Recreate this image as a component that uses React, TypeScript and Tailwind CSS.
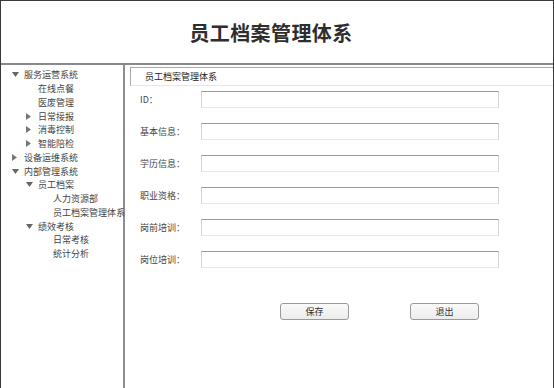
import React from "react";

type Node = { label: string; level: number; arrow?: "down" | "right" };

const tree: Node[] = [
  { label: "服务运营系统", level: 0, arrow: "down" },
  { label: "在线点餐", level: 1 },
  { label: "医废管理", level: 1 },
  { label: "日常接报", level: 1, arrow: "right" },
  { label: "消毒控制", level: 1, arrow: "right" },
  { label: "智能陪检", level: 1, arrow: "right" },
  { label: "设备运维系统", level: 0, arrow: "right" },
  { label: "内部管理系统", level: 0, arrow: "down" },
  { label: "员工档案", level: 1, arrow: "down" },
  { label: "人力资源部", level: 2 },
  { label: "员工档案管理体系", level: 2 },
  { label: "绩效考核", level: 1, arrow: "down" },
  { label: "日常考核", level: 2 },
  { label: "统计分析", level: 2 },
];

const fields = ["ID：", "基本信息：", "学历信息：", "职业资格：", "岗前培训：", "岗位培训："];

function Arrow({ dir }: { dir: "down" | "right" }) {
  if (dir === "down")
    return (
      <svg width="7" height="5" viewBox="0 0 7 5">
        <path d="M0 0 L7 0 L3.5 5 Z" fill="#666" />
      </svg>
    );
  return (
    <svg width="5" height="7" viewBox="0 0 5 7">
      <path d="M0 0 L5 3.5 L0 7 Z" fill="#777" />
    </svg>
  );
}

export default function App() {
  const indent = ["pl-[11px]", "pl-[25px]", "pl-[52px]"];
  return (
    <div
      className="w-[554px] h-[388px] bg-white border-l border-t border-r border-[#3a3a3a] flex flex-col overflow-hidden"
      style={{ fontFamily: '"Noto Sans CJK SC", "Noto Sans", sans-serif' }}
    >
      <div className="h-[64px] flex items-center justify-center border-b-2 border-[#8a8a8a] shrink-0 pr-[12px]">
        <span className="text-[20px] font-bold text-[#2e2e2e] mt-[1px] tracking-[0.4px]">员工档案管理体系</span>
      </div>
      <div className="flex flex-1">
        <div className="w-[124px] border-r-2 border-[#8f8f8f] pt-[3px] shrink-0">
          {tree.map((n, i) => (
            <div key={i} className={`flex items-center h-[13.75px] ${indent[n.level]}`}>
              {n.arrow ? (
                <span className="w-[12px] flex items-center">
                  <Arrow dir={n.arrow} />
                </span>
              ) : (
                <span className={n.level === 1 ? "w-[12px]" : "w-0"} />
              )}
              <span className="text-[9px] leading-none text-[#444] whitespace-nowrap">{n.label}</span>
            </div>
          ))}
        </div>
        <div className="flex-1 flex flex-col pt-[2px]">
          <div className="ml-[5px] h-[19px] border-t border-l border-[#a8a8a8] border-b border-b-[#e6e6e6] flex items-center pl-[14px]">
            <span className="text-[9px] text-[#222] leading-none">员工档案管理体系</span>
          </div>
          <div className="flex flex-col gap-[15px] mt-[5px] pl-[15px]">
            {fields.map((f) => (
              <div key={f} className="flex items-center h-[17px]">
                <span className="w-[61px] text-[9px] text-[#444] leading-none">{f}</span>
                <div className="w-[298px] h-[17px] border border-[#d4d4d4] border-t-[#9c9c9c] border-b-[#e8e8e8]" />
              </div>
            ))}
          </div>
          <div className="flex mt-[35px] pl-[155px] gap-[61px]">
            <div className="w-[69px] h-[17px] rounded-[3px] border border-[#9a9a9a] bg-gradient-to-b from-[#fafafa] to-[#ececec] flex items-center justify-center">
              <span className="text-[9px] text-[#333] leading-none">保存</span>
            </div>
            <div className="w-[69px] h-[17px] rounded-[3px] border border-[#9a9a9a] bg-gradient-to-b from-[#fafafa] to-[#ececec] flex items-center justify-center">
              <span className="text-[9px] text-[#333] leading-none">退出</span>
            </div>
          </div>
        </div>
      </div>
    </div>
  );
}
